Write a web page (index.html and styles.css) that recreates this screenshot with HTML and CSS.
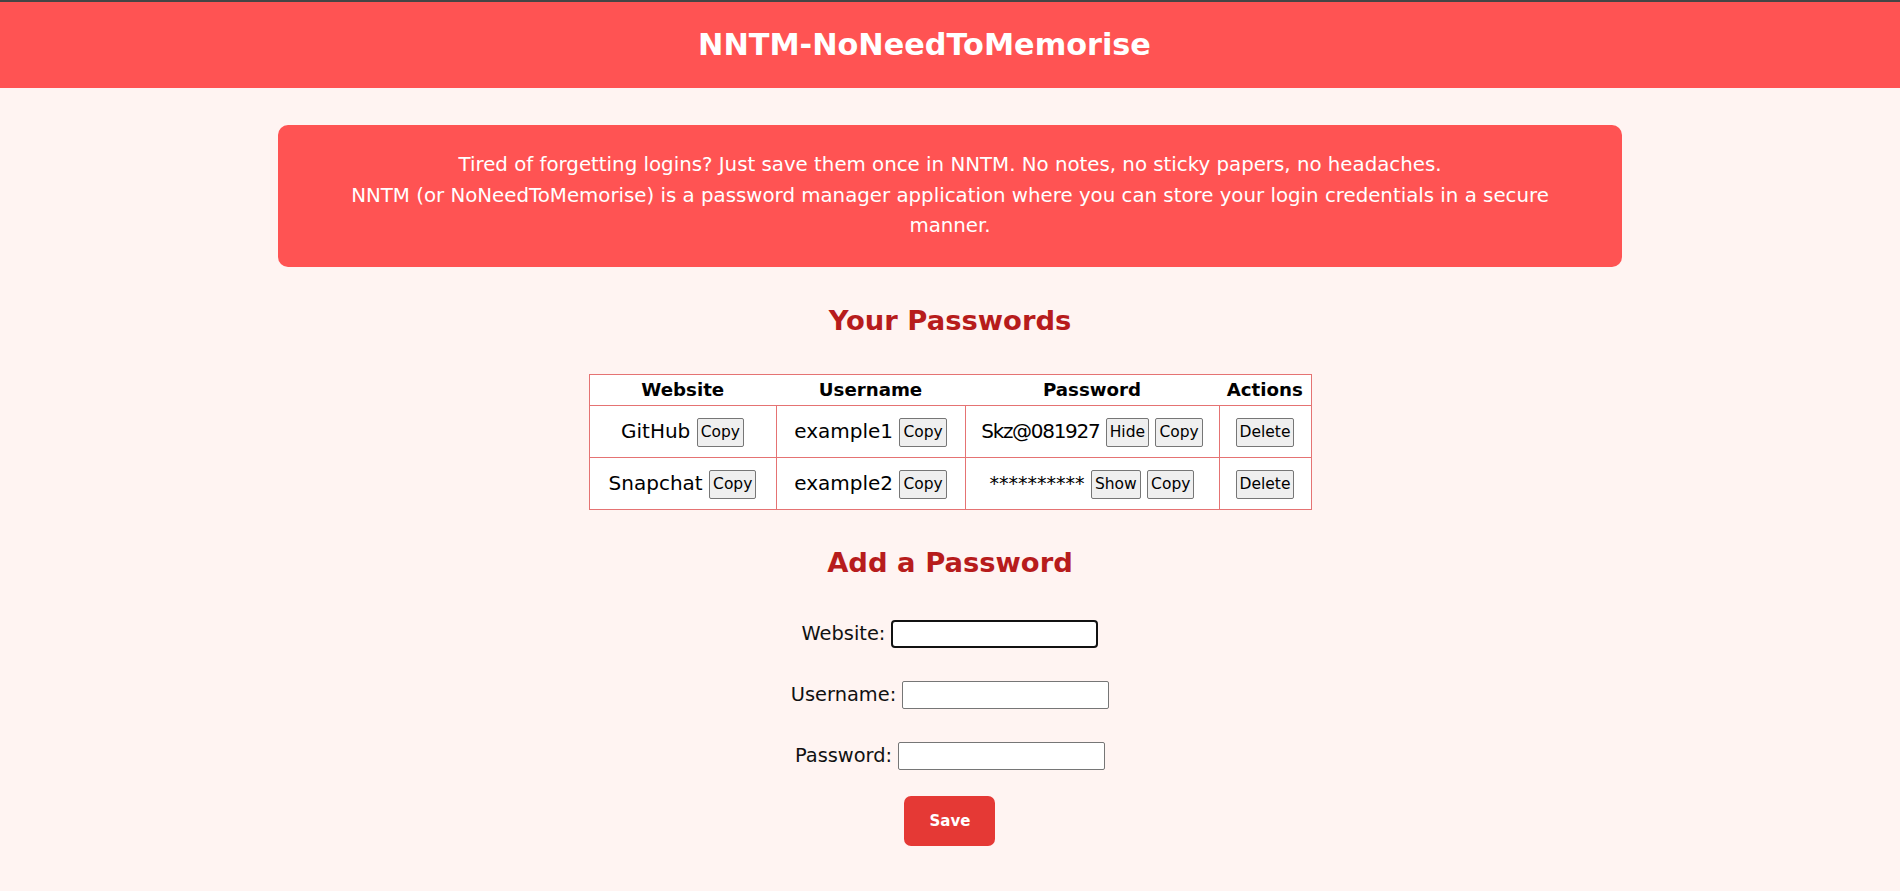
FILE: index.html
```html
<!DOCTYPE html>
<html lang="en">
<head>
<meta charset="utf-8">
<title>NNTM-NoNeedToMemorise</title>
<link rel="stylesheet" href="styles.css">
</head>
<body>
<div class="topbar"></div>
<header class="site-header">
  <h1 class="site-title">NNTM-NoNeedToMemorise</h1>
</header>
<main class="content">
  <section class="intro">
    <p class="intro-text">Tired of forgetting logins? Just save them once in NNTM. No notes, no sticky papers, no headaches.<br>NNTM (or NoNeedToMemorise) is a password manager application where you can store your login credentials in a secure<br>manner.</p>
  </section>

  <h2 class="section-title">Your Passwords</h2>
  <table class="pw-table">
    <colgroup>
      <col class="col-site">
      <col class="col-user">
      <col class="col-pass">
      <col class="col-act">
    </colgroup>
    <thead>
      <tr><th>Website</th><th>Username</th><th>Password</th><th>Actions</th></tr>
    </thead>
    <tbody>
      <tr>
        <td>GitHub <button class="small-btn">Copy</button></td>
        <td>example1 <button class="small-btn">Copy</button></td>
        <td><span class="pw-text">Skz@081927</span> <button class="small-btn">Hide</button> <button class="small-btn">Copy</button></td>
        <td><button class="small-btn">Delete</button></td>
      </tr>
      <tr>
        <td>Snapchat <button class="small-btn">Copy</button></td>
        <td>example2 <button class="small-btn">Copy</button></td>
        <td><span class="stars">**********</span> <button class="small-btn">Show</button> <button class="small-btn">Copy</button></td>
        <td><button class="small-btn">Delete</button></td>
      </tr>
    </tbody>
  </table>

  <h2 class="section-title add-title">Add a Password</h2>
  <form class="pw-form">
    <div class="form-row">
      <label class="form-label" for="website">Website:</label>
      <input class="form-input is-focused" id="website" type="text">
    </div>
    <div class="form-row">
      <label class="form-label" for="username">Username:</label>
      <input class="form-input" id="username" type="text">
    </div>
    <div class="form-row">
      <label class="form-label" for="password">Password:</label>
      <input class="form-input" id="password" type="password">
    </div>
    <button class="save-btn" type="button">Save</button>
  </form>
</main>
</body>
</html>
```
FILE: styles.css
```css
* {
  box-sizing: border-box;
}

body {
  margin: 0;
  background: #fff4f2;
  font-family: "DejaVu Sans", "Noto Sans", sans-serif;
  color: #000;
}

.topbar {
  height: 2px;
  background: #454545;
}

.site-header {
  background: #ff5353;
  height: 86px;
  display: flex;
  align-items: center;
  justify-content: center;
  padding-right: 51px;
}

.site-title {
  margin: 0;
  color: #fff;
  font-size: 30.3px;
  font-weight: 700;
  line-height: 40px;
}

.content {
  display: flex;
  flex-direction: column;
  align-items: center;
}

.intro {
  width: 1344px;
  margin-top: 37px;
  background: #ff5353;
  border-radius: 10px;
  padding: 25px 30px;
}

.intro-text {
  margin: 0;
  color: #fff;
  font-size: 19.8px;
  line-height: 30.5px;
  text-align: center;
  white-space: nowrap;
}

.section-title {
  margin: 34px 0 33px;
  color: #b71c1c;
  font-size: 27.4px;
  font-weight: 700;
  line-height: 40px;
}

.add-title {
  margin-top: 33px;
  margin-bottom: 36px;
}

.pw-table {
  border-collapse: collapse;
  table-layout: fixed;
  width: 722px;
  background: #fff;
  border: 1px solid #e57373;
  font-size: 20px;
}

.col-site { width: 187px; }
.col-user { width: 189px; }
.col-pass { width: 254px; }
.col-act { width: 92px; }

.pw-table th {
  height: 31px;
  padding: 0;
  font-weight: 700;
  font-size: 18.2px;
  line-height: 30px;
  text-align: center;
}

.pw-table td {
  height: 52px;
  padding: 0;
  border: 1px solid #e57373;
  text-align: center;
  vertical-align: middle;
  line-height: 30px;
  white-space: nowrap;
}

.pw-text {
  letter-spacing: -1.3px;
}

.stars {
  font-size: 19px;
}

.small-btn {
  font-family: inherit;
  font-size: 15.5px;
  height: 29px;
  padding: 0 3px;
  color: #000;
  background: #efefef;
  border: 1px solid #767676;
  border-radius: 2px;
  vertical-align: middle;
}

.pw-form {
  display: flex;
  flex-direction: column;
  align-items: center;
  gap: 31px;
}

.form-row {
  display: flex;
  align-items: center;
  gap: 6px;
  height: 30px;
}

.form-label {
  font-size: 19.4px;
  color: #111;
}

.form-input {
  width: 207px;
  height: 28px;
  background: #fff;
  border: 1px solid #767676;
  border-radius: 2px;
  font-family: inherit;
  font-size: 16px;
  padding: 1px 3px;
}

.form-input.is-focused {
  border: 2px solid #111;
  border-radius: 4px;
  outline: none;
}

.save-btn {
  margin-top: -6px;
  width: 91px;
  height: 50px;
  background: #e53935;
  color: #fff;
  border: none;
  border-radius: 7px;
  font-family: inherit;
  font-size: 15px;
  font-weight: 700;
}
```
